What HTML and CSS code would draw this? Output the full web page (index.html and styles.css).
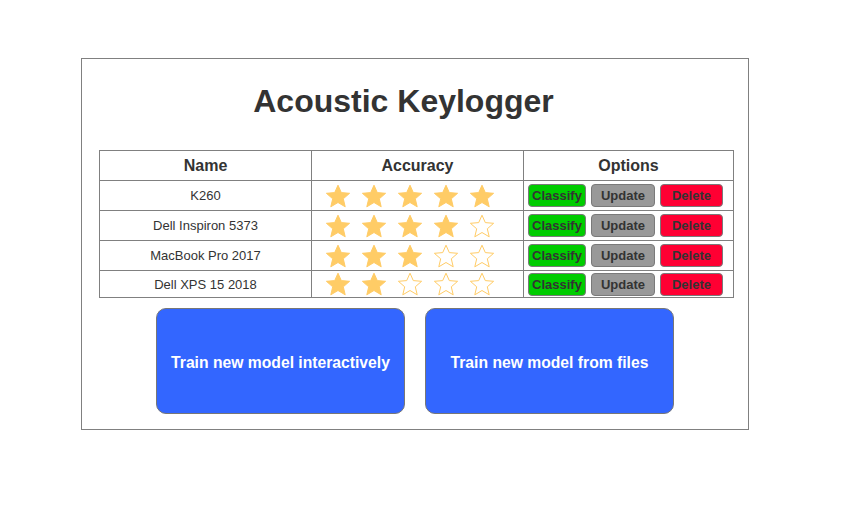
FILE: index.html
```html
<!DOCTYPE html>
<html>
<head>
<meta charset="utf-8">
<link rel="stylesheet" href="styles.css">
</head>
<body>
<svg width="0" height="0" class="defs">
  <defs>
    <path id="star" d="M13 1.2 L16.3 8.6 L24.6 9.3 L18.3 14.8 L20.2 22.8 L13 18.5 L5.8 22.8 L7.7 14.8 L1.4 9.3 L9.7 8.6 Z"/>
  </defs>
</svg>
<div class="panel">
  <h1 class="title">Acoustic Keylogger</h1>
  <table class="models">
    <colgroup>
      <col class="col-name">
      <col class="col-acc">
      <col class="col-opt">
    </colgroup>
    <thead>
      <tr><th>Name</th><th>Accuracy</th><th>Options</th></tr>
    </thead>
    <tbody>
      <tr>
        <td class="name">K260</td>
        <td><div class="stars">
          <svg class="star full" viewBox="0 0 26 24"><use href="#star"/></svg>
          <svg class="star full" viewBox="0 0 26 24"><use href="#star"/></svg>
          <svg class="star full" viewBox="0 0 26 24"><use href="#star"/></svg>
          <svg class="star full" viewBox="0 0 26 24"><use href="#star"/></svg>
          <svg class="star full" viewBox="0 0 26 24"><use href="#star"/></svg>
        </div></td>
        <td><div class="opts"><button class="btn classify">Classify</button><button class="btn update">Update</button><button class="btn delete">Delete</button></div></td>
      </tr>
      <tr>
        <td class="name">Dell Inspiron 5373</td>
        <td><div class="stars">
          <svg class="star full" viewBox="0 0 26 24"><use href="#star"/></svg>
          <svg class="star full" viewBox="0 0 26 24"><use href="#star"/></svg>
          <svg class="star full" viewBox="0 0 26 24"><use href="#star"/></svg>
          <svg class="star full" viewBox="0 0 26 24"><use href="#star"/></svg>
          <svg class="star empty" viewBox="0 0 26 24"><use href="#star"/></svg>
        </div></td>
        <td><div class="opts"><button class="btn classify">Classify</button><button class="btn update">Update</button><button class="btn delete">Delete</button></div></td>
      </tr>
      <tr>
        <td class="name">MacBook Pro 2017</td>
        <td><div class="stars">
          <svg class="star full" viewBox="0 0 26 24"><use href="#star"/></svg>
          <svg class="star full" viewBox="0 0 26 24"><use href="#star"/></svg>
          <svg class="star full" viewBox="0 0 26 24"><use href="#star"/></svg>
          <svg class="star empty" viewBox="0 0 26 24"><use href="#star"/></svg>
          <svg class="star empty" viewBox="0 0 26 24"><use href="#star"/></svg>
        </div></td>
        <td><div class="opts"><button class="btn classify">Classify</button><button class="btn update">Update</button><button class="btn delete">Delete</button></div></td>
      </tr>
      <tr class="last">
        <td class="name">Dell XPS 15 2018</td>
        <td><div class="stars">
          <svg class="star full" viewBox="0 0 26 24"><use href="#star"/></svg>
          <svg class="star full" viewBox="0 0 26 24"><use href="#star"/></svg>
          <svg class="star empty" viewBox="0 0 26 24"><use href="#star"/></svg>
          <svg class="star empty" viewBox="0 0 26 24"><use href="#star"/></svg>
          <svg class="star empty" viewBox="0 0 26 24"><use href="#star"/></svg>
        </div></td>
        <td><div class="opts"><button class="btn classify">Classify</button><button class="btn update">Update</button><button class="btn delete">Delete</button></div></td>
      </tr>
    </tbody>
  </table>
  <div class="actions">
    <button class="big">Train new model interactively</button>
    <button class="big">Train new model from files</button>
  </div>
</div>
</body>
</html>
```
FILE: styles.css
```css
html, body {
  margin: 0;
  padding: 0;
  background: #ffffff;
}
body {
  font-family: "Liberation Sans", Arial, sans-serif;
  color: #333333;
  padding: 58px 0 0 81px;
}
.defs {
  position: absolute;
  width: 0;
  height: 0;
}
.panel {
  box-sizing: border-box;
  width: 668px;
  height: 372px;
  border: 1px solid #808080;
  padding: 0 0 0 17px;
}
.title {
  margin: 22px 0 0 0;
  padding-right: 40px;
  height: 69px;
  line-height: 40px;
  font-size: 32px;
  font-weight: bold;
  text-align: center;
  color: #333333;
}
.models {
  border-collapse: collapse;
  width: 634px;
  table-layout: fixed;
}
.col-name {
  width: 212px;
}
.col-acc {
  width: 212px;
}
.col-opt {
  width: 210px;
}
.models th, .models td {
  border: 1px solid #808080;
  padding: 0;
}
.models th {
  height: 29px;
  font-size: 16px;
  font-weight: bold;
  text-align: center;
}
.models td {
  height: 29px;
  font-size: 13px;
  text-align: center;
}
.models tr.last td {
  height: 26px;
}
.stars {
  display: flex;
  gap: 10px;
  padding-left: 13px;
  align-items: center;
}
.star {
  width: 26px;
  height: 24px;
  display: block;
}
.star.full {
  fill: #ffcc66;
  stroke: #ffcc66;
  stroke-width: 1;
}
.star.empty {
  fill: #ffffff;
  stroke: #ffcc66;
  stroke-width: 1;
}
.opts {
  display: flex;
  gap: 5px;
  padding-left: 4px;
  align-items: center;
}
.btn {
  box-sizing: border-box;
  height: 23px;
  padding: 0;
  border: 1px solid #7a7a7a;
  border-radius: 4px;
  font-family: "Liberation Sans", Arial, sans-serif;
  font-size: 13px;
  font-weight: bold;
  color: #333333;
}
.classify {
  width: 58px;
  background: #00cc00;
}
.update {
  width: 64px;
  background: #999999;
}
.delete {
  width: 63px;
  background: #ff0033;
}
.actions {
  display: flex;
  gap: 20px;
  padding-left: 57px;
  margin-top: 10px;
}
.big {
  box-sizing: border-box;
  width: 249px;
  height: 106px;
  background: #3366ff;
  border: 1px solid #777777;
  border-radius: 10px;
  color: #ffffff;
  font-family: "Liberation Sans", Arial, sans-serif;
  font-size: 15.7px;
  font-weight: bold;
  padding: 3px 0 0 0;
}
```
